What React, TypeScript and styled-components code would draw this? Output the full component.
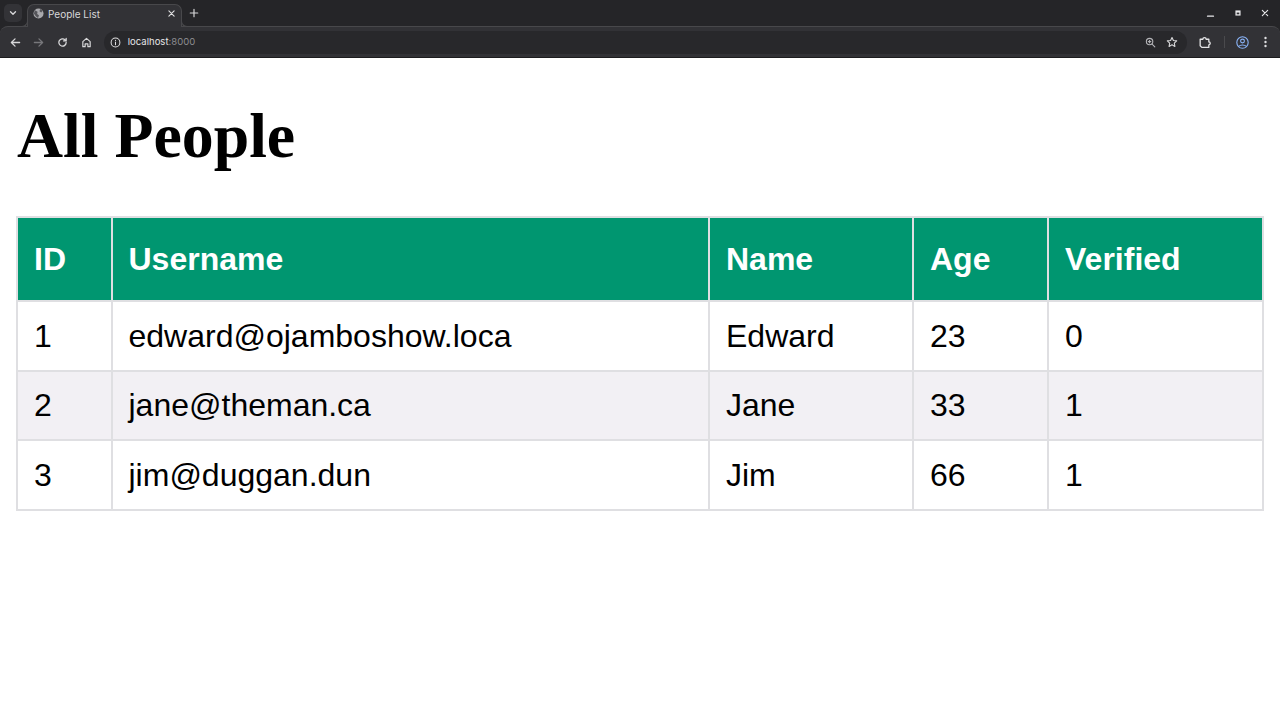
import React from "react";
import styled, { createGlobalStyle } from "styled-components";

const Global = createGlobalStyle`
  html, body { margin: 0; padding: 0; background: #fff; }
  body { width: 1280px; height: 720px; overflow: hidden; }
`;

const Chrome = styled.div`
  height: 58px;
  background: #252528;
  font-family: Inter, "Liberation Sans", sans-serif;
  display: flex;
  flex-direction: column;
`;

const TabStrip = styled.div`
  height: 26px;
  display: flex;
  align-items: flex-end;
  padding-left: 4px;
  box-sizing: border-box;
`;

const TabSearch = styled.div`
  width: 18px;
  height: 18px;
  margin-bottom: 4px;
  border-radius: 5px;
  background: #333337;
  display: flex;
  align-items: center;
  justify-content: center;
`;

const Tab = styled.div`
  position: relative;
  z-index: 1;
  width: 155px;
  height: 23px;
  margin-left: 5px;
  margin-bottom: -1px;
  padding: 0 5px 5px 5px;
  box-sizing: border-box;
  background: #323236;
  border: 1px solid #48484b;
  border-bottom: none;
  border-radius: 7px 7px 0 0;
  display: flex;
  align-items: center;
  gap: 5px;
  color: #d8d8da;
  font-size: 10px;

  &::before,
  &::after {
    content: "";
    position: absolute;
    bottom: 0;
    width: 6px;
    height: 6px;
    box-sizing: border-box;
    border-bottom: 1px solid #48484b;
    background: transparent;
  }
  &::before {
    left: -6px;
    border-right: 1px solid #48484b;
    border-bottom-right-radius: 6px;
  }
  &::after {
    right: -6px;
    border-left: 1px solid #48484b;
    border-bottom-left-radius: 6px;
  }
`;

const TabTitle = styled.span`
  flex: 1;
  margin-left: -1px;
`;

const NewTab = styled.div`
  width: 14px;
  height: 14px;
  margin: 0 0 6px 5px;
  display: flex;
  align-items: center;
  justify-content: center;
`;

const WindowControls = styled.div`
  margin-left: auto;
  margin-right: 2px;
  display: flex;
  align-self: flex-start;
  height: 26px;
`;

const WindowButton = styled.div`
  width: 27px;
  display: flex;
  align-items: center;
  justify-content: center;
`;

const Toolbar = styled.div`
  height: 32px;
  background: #323236;
  display: flex;
  align-items: center;
  padding: 0 8px;
  box-sizing: border-box;
  border-top: 1px solid #48484b;
  border-bottom: 1px solid #1c1c1e;
  border-radius: 8px 8px 0 0;
`;

const NavButton = styled.div`
  width: 14px;
  height: 14px;
  margin-right: 9.85px;
  display: flex;
  align-items: center;
  justify-content: center;
`;

const Omnibox = styled.div`
  flex: 1;
  height: 23px;
  margin: 0 10px 0 0.4px;
  padding: 0 8px 0 6px;
  border-radius: 12px;
  background: #28282b;
  display: flex;
  align-items: center;
  font-size: 9.5px;
  letter-spacing: 0.02px;
`;

const Url = styled.span`
  margin: 0 0 2px 7px;
  color: #e6e6e8;
  flex: 1;
`;

const Port = styled.span`
  color: #8d8d91;
`;

const OmniIcon = styled.div`
  width: 14px;
  height: 14px;
  margin-left: 8px;
  display: flex;
  align-items: center;
  justify-content: center;
`;

const ToolIcon = styled.div<{ $gap?: number }>`
  width: 14px;
  height: 14px;
  margin-right: ${(p) => p.$gap ?? 8}px;
  display: flex;
  align-items: center;
  justify-content: center;
`;

const Divider = styled.div`
  width: 1px;
  height: 12px;
  background: #4a4a4d;
  margin-right: 10px;
`;

const Page = styled.main`
  padding: 0 16px;
  color: #000;
`;

const Heading = styled.h1`
  font-family: "Liberation Serif", serif;
  font-size: 63.8px;
  font-weight: 700;
  line-height: 74px;
  margin: 41px 0 43px 1px;
`;

const Table = styled.table`
  width: 1246px;
  border-collapse: collapse;
  table-layout: fixed;
  font-family: "Liberation Sans", sans-serif;
  font-size: 32px;
  border: 2px solid #dfdfe2;

  th:nth-child(2),
  td:nth-child(2) {
    padding-left: 15.5px;
  }
`;

const HeadCell = styled.th`
  background: #009670;
  color: #fff;
  text-align: left;
  font-weight: 700;
  padding: 0 16px;
  height: 84px;
  border: 2px solid #dfdfe2;
  box-sizing: border-box;
`;

const Row = styled.tr<{ $alt: boolean }>`
  background: ${(p) => (p.$alt ? "#f2f0f4" : "#ffffff")};
`;

const Cell = styled.td`
  padding: 1px 16px 0;
  height: 69.5px;
  border: 2px solid #dfdfe2;
  box-sizing: border-box;
`;

const Stroke: React.FC<{ size?: number; color?: string; width?: number; children: React.ReactNode }> = ({
  size = 12,
  color = "#d8d8da",
  width = 1.5,
  children,
}) => (
  <svg width={size} height={size} viewBox="0 0 12 12" fill="none" stroke={color} strokeWidth={width} strokeLinecap="round" strokeLinejoin="round">
    {children}
  </svg>
);

const rows = [
  ["1", "edward@ojamboshow.loca", "Edward", "23", "0"],
  ["2", "jane@theman.ca", "Jane", "33", "1"],
  ["3", "jim@duggan.dun", "Jim", "66", "1"],
];

const widths = [95, 597, 204, 135, 215];
const heads = ["ID", "Username", "Name", "Age", "Verified"];

export default function App() {
  return (
    <>
      <Global />
      <Chrome>
        <TabStrip>
          <TabSearch>
            <Stroke size={10} width={1.6}><path d="M3 4.5 6 7.5 9 4.5" /></Stroke>
          </TabSearch>
          <Tab>
            <svg width="11" height="11" viewBox="0 0 12 12">
              <circle cx="6" cy="6" r="5.5" fill="#a9a9ad" />
              <path d="M2 2.5 5 4 4.5 6.5 6.5 8 5.5 11 3 9 1 6ZM8 1l2.5 2L9 5 7 3.5Z" fill="#55555a" />
            </svg>
            <TabTitle>People List</TabTitle>
            <Stroke size={9} width={1.5} color="#e0e0e2"><path d="M2.5 2.5l7 7M9.5 2.5l-7 7" /></Stroke>
          </Tab>
          <NewTab>
            <Stroke size={10} width={1.4}><path d="M6 1.5v9M1.5 6h9" /></Stroke>
          </NewTab>
          <WindowControls>
            <WindowButton>
              <Stroke size={9} width={1.6} color="#e8e8ea"><path d="M2 9.5h8" /></Stroke>
            </WindowButton>
            <WindowButton>
              <svg width="6" height="6" viewBox="0 0 7 7"><rect x="0.5" y="0.5" width="6" height="6" fill="#e8e8ea" /><rect x="2" y="3" width="3" height="2" fill="#323236" /></svg>
            </WindowButton>
            <WindowButton>
              <Stroke size={8} width={1.7} color="#e8e8ea"><path d="M2 2l8 8M10 2l-8 8" /></Stroke>
            </WindowButton>
          </WindowControls>
        </TabStrip>
        <Toolbar>
          <NavButton>
            <Stroke size={11} width={1.4}><path d="M10.5 6h-9M5.5 2 1.5 6l4 4" /></Stroke>
          </NavButton>
          <NavButton>
            <Stroke size={11} width={1.4} color="#77777b"><path d="M1.5 6h9M6.5 2l4 4-4 4" /></Stroke>
          </NavButton>
          <NavButton>
            <Stroke size={11} width={1.4}><path d="M10 6a4 4 0 1 1-1.2-2.9L10 4.3M10 1.5v2.8H7.2" /></Stroke>
          </NavButton>
          <NavButton>
            <Stroke size={11} width={1.3}><path d="M2 10.5V5l4-3.5L10 5v5.5H7.5V7.5h-3v3Z" /></Stroke>
          </NavButton>
          <Omnibox>
            <Stroke size={11} width={1.1} color="#e0e0e2"><circle cx="6" cy="6" r="4.8" /><path d="M6 5.5v3M6 3.5v.2" /></Stroke>
            <Url>localhost<Port>:8000</Port></Url>
            <OmniIcon>
              <Stroke size={11} width={1.2} color="#b4b4b8"><circle cx="5" cy="5" r="3.5" /><path d="M7.7 7.7l3 3M3.6 5h2.8M5 3.6v2.8" /></Stroke>
            </OmniIcon>
            <OmniIcon>
              <Stroke size={12} width={1.1}><path d="M6 1.5l1.4 3 3.3.4-2.4 2.2.6 3.3L6 8.8l-2.9 1.6.6-3.3L1.3 4.9l3.3-.4Z" /></Stroke>
            </OmniIcon>
          </Omnibox>
          <ToolIcon $gap={13}>
            <Stroke size={13} width={1.2} color="#e4e4e6"><path d="M2 3h2.5a1.5 1.5 0 0 1 3 0H10v2.5a1.2 1.2 0 0 1 0 2.6V10.5H3.5L2 9Z" /></Stroke>
          </ToolIcon>
          <Divider />
          <ToolIcon $gap={9}>
            <svg width="13" height="13" viewBox="0 0 13 13" fill="none" stroke="#8ab4f8" strokeWidth="1.1">
              <circle cx="6.5" cy="6.5" r="5.7" />
              <circle cx="6.5" cy="5" r="1.9" />
              <path d="M3 10.3c1-1.7 6-1.7 7 0" />
            </svg>
          </ToolIcon>
          <ToolIcon $gap={0}>
            <svg width="3" height="12" viewBox="0 0 3 12" fill="#e0e0e2">
              <circle cx="1.5" cy="2" r="1.2" /><circle cx="1.5" cy="6" r="1.2" /><circle cx="1.5" cy="10" r="1.2" />
            </svg>
          </ToolIcon>
        </Toolbar>
      </Chrome>
      <Page>
        <Heading>All People</Heading>
        <Table>
          <colgroup>
            {widths.map((w, i) => (
              <col key={i} style={{ width: w }} />
            ))}
          </colgroup>
          <thead>
            <tr>
              {heads.map((h) => (
                <HeadCell key={h}>{h}</HeadCell>
              ))}
            </tr>
          </thead>
          <tbody>
            {rows.map((r, i) => (
              <Row key={r[0]} $alt={i === 1}>
                {r.map((c, j) => (
                  <Cell key={j}>{c}</Cell>
                ))}
              </Row>
            ))}
          </tbody>
        </Table>
      </Page>
    </>
  );
}
